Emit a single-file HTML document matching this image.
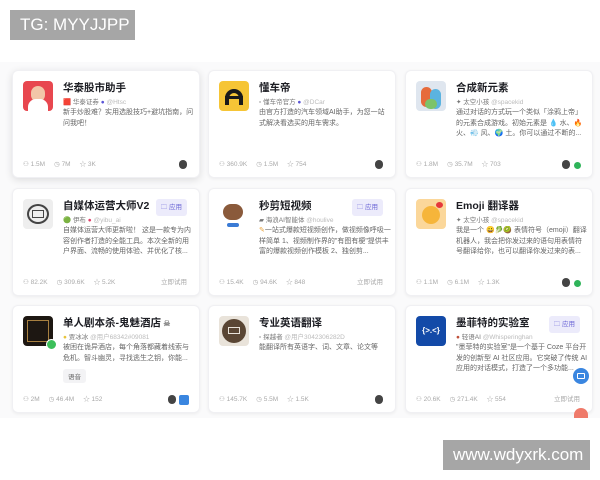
<!DOCTYPE html>
<html><head><meta charset="utf-8"><style>
*{margin:0;padding:0;box-sizing:border-box}
body{width:600px;height:480px;overflow:hidden;background:#fff;font-family:"Liberation Sans","Noto Sans CJK SC",sans-serif;position:relative}
.bg{position:absolute;left:0;top:62px;width:600px;height:356px;background:#fafafb}
.card{position:absolute;width:188px;height:108px;background:#fff;border-radius:6px;box-shadow:0 1px 3px rgba(0,0,0,.06);border:1px solid #f0f0f3}
.card.hi{box-shadow:0 2px 8px rgba(0,0,0,.12)}
.ic{position:absolute;left:10px;top:10px;width:30px;height:30px;border-radius:4px;overflow:hidden}
.t{position:absolute;left:50px;top:9px;font-size:10.5px;font-weight:bold;color:#1c1d23;white-space:nowrap}
.s{position:absolute;left:50px;top:25px;font-size:6.5px;color:#777;white-space:nowrap}
.s i{color:#bbb;font-style:normal}
.d{position:absolute;left:50px;top:37px;width:132px;font-size:7px;line-height:10.5px;color:#666;height:32px;overflow:hidden}
.f{position:absolute;left:10px;bottom:9px;font-size:6.5px;color:#aaa;white-space:nowrap}
.f span{margin-right:9px}
.tag{position:absolute;right:12px;top:10px;background:#ecebfb;color:#6b66d6;font-size:6.5px;padding:2px 5px;border-radius:3px}
.try{position:absolute;right:12px;bottom:9px;font-size:6.5px;color:#aaa}
.av{position:absolute;bottom:8px;width:8px;height:9px;border-radius:4px;background:#444}
.wm{position:absolute;background:#a6a6a6;color:#fff;font-size:17px}
</style></head><body>
<div class="bg"></div>

<div class="card hi" style="left:12px;top:70px">
<div class="ic" style="background:#e8474f"><div style="position:absolute;left:8px;top:5px;width:14px;height:16px;border-radius:7px;background:#f2c6a8"></div><div style="position:absolute;left:5px;top:18px;width:20px;height:12px;border-radius:8px 8px 0 0;background:#fff"></div></div>
<div class="t">华泰股市助手</div>
<div class="s">🟥 华泰证券 <span style="color:#5a55d6">●</span> <i>@Htsc</i></div>
<div class="d">新手炒股难？实用选股技巧+避坑指南，问问我吧！</div>
<div class="f"><span>⚇ 1.5M</span><span>◷ 7M</span><span>☆ 3K</span></div>
<div class="av" style="right:12px"></div>
</div>

<div class="card" style="left:208px;top:70px">
<div class="ic" style="background:#f6c536"><div style="position:absolute;left:6px;top:8px;width:18px;height:16px;border:4px solid #1a1a1a;border-bottom:none;border-radius:9px 9px 0 0"></div><div style="position:absolute;left:6px;top:15px;width:18px;height:3px;background:#1a1a1a"></div></div>
<div class="t">懂车帝</div>
<div class="s">▫ 懂车帝官方 <span style="color:#5a55d6">●</span> <i>@DCar</i></div>
<div class="d">由官方打造的汽车领域AI助手，为您一站式解决看选买的用车需求。</div>
<div class="f"><span>⚇ 360.9K</span><span>◷ 1.5M</span><span>☆ 754</span></div>
<div class="av" style="right:12px"></div>
</div>

<div class="card" style="left:405px;top:70px">
<div class="ic" style="background:#dfe6ef"><div style="position:absolute;left:5px;top:6px;width:11px;height:20px;border-radius:6px;background:#e66b3b"></div><div style="position:absolute;left:14px;top:8px;width:11px;height:20px;border-radius:6px;background:#5bb3e0"></div><div style="position:absolute;left:9px;top:18px;width:12px;height:10px;border-radius:5px;background:#7cc36a"></div></div>
<div class="t">合成新元素</div>
<div class="s">✦ 太空小孩 <i>@spacekid</i></div>
<div class="d">通过对话的方式玩一个类似「涂鸦上帝」的元素合成游戏。初始元素是 💧 水、🔥 火、💨 风、🌍 土。你可以通过不断的...</div>
<div class="f"><span>⚇ 1.8M</span><span>◷ 35.7M</span><span>☆ 703</span></div>
<div class="av" style="right:22px"></div><div class="av" style="right:11px;background:#2fb45a;border-radius:50%;width:7px;height:7px"></div>
</div>

<div class="card" style="left:12px;top:188px">
<div class="ic" style="background:#eee"><div style="position:absolute;left:4px;top:5px;width:22px;height:20px;border:2px solid #444;border-radius:50%"></div><div style="position:absolute;left:9px;top:11px;width:12px;height:8px;border:1.5px solid #444"></div></div>
<div class="t">自媒体运营大师V2</div>
<div class="tag">🗀 应用</div>
<div class="s">🟢 伊布 <span style="color:#e0406a">●</span> <i>@yibu_ai</i></div>
<div class="d">自媒体运营大师更新啦！ 这是一款专为内容创作者打造的全能工具。本次全新的用户界面、流畅的使用体验、并优化了核...</div>
<div class="f"><span>⚇ 82.2K</span><span>◷ 309.6K</span><span>☆ 5.2K</span></div>
<div class="try">立即试用</div>
</div>

<div class="card" style="left:208px;top:188px">
<div class="ic" style="background:#fff"><div style="position:absolute;left:4px;top:5px;width:20px;height:16px;border-radius:8px;background:#8a5a3b"></div><div style="position:absolute;left:8px;top:24px;width:12px;height:4px;background:#3a7bd5;border-radius:2px"></div></div>
<div class="t">秒剪短视频</div>
<div class="tag">🗀 应用</div>
<div class="s">▰ 海浪AI智能体 <i>@houlive</i></div>
<div class="d"><span style="color:#e8a23a">✎</span>一站式爆款短视频创作，做视频像呼吸一样简单 1、视频制作界的"有图有梗"提供丰富的爆款视频创作模板 2、独创剪...</div>
<div class="f"><span>⚇ 15.4K</span><span>◷ 94.6K</span><span>☆ 848</span></div>
<div class="try">立即试用</div>
</div>

<div class="card" style="left:405px;top:188px">
<div class="ic" style="background:#fbd79a"><div style="position:absolute;left:6px;top:7px;width:18px;height:18px;border-radius:50%;background:#f6b53a"></div><div style="position:absolute;left:20px;top:3px;width:7px;height:6px;border-radius:50%;background:#e5383b"></div></div>
<div class="t">Emoji 翻译器</div>
<div class="s">✦ 太空小孩 <i>@spacekid</i></div>
<div class="d">我是一个 😀🥬🥝 表情符号（emoji）翻译机器人，我会把你发过来的语句用表情符号翻译给你，也可以翻译你发过来的表...</div>
<div class="f"><span>⚇ 1.1M</span><span>◷ 6.1M</span><span>☆ 1.3K</span></div>
<div class="av" style="right:22px"></div><div class="av" style="right:11px;background:#2fb45a;border-radius:50%;width:7px;height:7px"></div>
</div>

<div class="card" style="left:12px;top:305px">
<div class="ic" style="background:#1d1712"><div style="position:absolute;left:4px;top:4px;width:22px;height:22px;border:1px solid #a88040"></div></div>
<div style="position:absolute;left:33px;top:33px;width:11px;height:11px;border-radius:50%;background:#3cbf5a;border:1px solid #fff"></div>
<div class="t">单人剧本杀-鬼魅酒店<span style="font-size:8px;color:#888"> ☠</span></div>
<div class="s"><span style="color:#e8c43a">●</span> 贾冰冰 <i>@用户68342#09081</i></div>
<div class="d" style="height:22px">被困在诡异酒店，每个角落都藏着线索与危机。智斗幽灵，寻找逃生之钥，你能...</div>
<div style="position:absolute;left:50px;top:63px;font-size:6.5px;color:#666;background:#f3f3f5;padding:2px 5px;border-radius:3px">语音</div>
<div class="f"><span>⚇ 2M</span><span>◷ 46.4M</span><span>☆ 152</span></div>
<div class="av" style="right:23px"></div><div style="position:absolute;right:10px;bottom:7px;width:10px;height:10px;border-radius:2px;background:#3a86e0"></div>
</div>

<div class="card" style="left:208px;top:305px">
<div class="ic" style="background:#e9e3da"><div style="position:absolute;left:3px;top:3px;width:24px;height:24px;border-radius:50%;background:#5a4634"></div><div style="position:absolute;left:9px;top:11px;width:12px;height:7px;border:1px solid #e9e3da"></div></div>
<div class="t">专业英语翻译</div>
<div class="s">▫ 探越者 <i>@用户3042306282D</i></div>
<div class="d">能翻译所有英语字、词、文章、论文等</div>
<div class="f"><span>⚇ 145.7K</span><span>◷ 5.5M</span><span>☆ 1.5K</span></div>
<div class="av" style="right:12px"></div>
</div>

<div class="card" style="left:405px;top:305px">
<div class="ic" style="background:#134aa8;color:#fff;font-size:8px;font-weight:bold;text-align:center;line-height:30px">{&gt;.&lt;}</div>
<div class="t">墨菲特的实验室</div>
<div class="tag">🗀 应用</div>
<div class="s"><span style="color:#c0503a">●</span> 轻语AI <i>@Whisperinghan</i></div>
<div class="d">"墨菲特的实验室"是一个基于 Coze 平台开发的创新型 AI 社区应用。它突破了传统 AI 应用的对话模式，打造了一个多功能...</div>
<div class="f"><span>⚇ 20.6K</span><span>◷ 271.4K</span><span>☆ 554</span></div>
<div class="try">立即试用</div>
</div>
<div style="position:absolute;left:573px;top:368px;width:16px;height:16px;border-radius:50%;background:#3a86e0"><div style="position:absolute;left:4px;top:5px;width:8px;height:6px;border:1px solid #fff;border-radius:1px"></div></div>
<div style="position:absolute;left:574px;top:408px;width:14px;height:10px;border-radius:7px 7px 0 0;background:#ef7a6a"></div>

<div class="wm" style="left:10px;top:10px;width:125px;height:30px;line-height:30px;padding-left:10px">TG: MYYJJPP</div>
<div class="wm" style="left:443px;top:440px;width:147px;height:30px;line-height:30px;padding-left:10px">www.wdyxrk.com</div>
</body></html>
